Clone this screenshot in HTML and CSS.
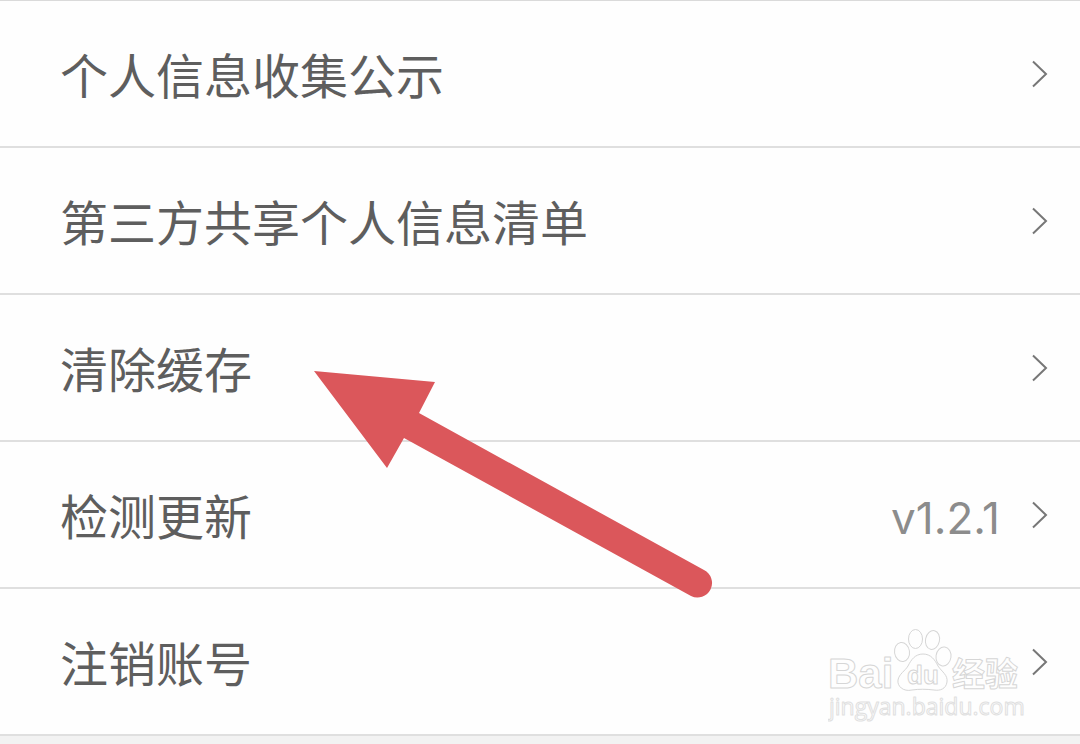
FILE: index.html
```html
<!DOCTYPE html>
<html lang="zh-CN">
<head>
<meta charset="utf-8">
<meta name="viewport" content="width=device-width, initial-scale=1">
<title>设置</title>
<link rel="stylesheet" href="styles.css">
</head>
<body>
<main class="screen">
  <nav class="list">
    <a class="row" href="#collect"><span class="label">个人信息收集公示</span><svg class="chevron" viewBox="0 0 16 28"><path d="M1 1.500L14 14L1 26.500"/></svg></a>
    <a class="row" href="#share"><span class="label">第三方共享个人信息清单</span><svg class="chevron" viewBox="0 0 16 28"><path d="M1 1.500L14 14L1 26.500"/></svg></a>
    <a class="row" href="#cache"><span class="label">清除缓存</span><svg class="chevron" viewBox="0 0 16 28"><path d="M1 1.500L14 14L1 26.500"/></svg></a>
    <a class="row" href="#update"><span class="label">检测更新</span><span class="value">v1.2.1</span><svg class="chevron" viewBox="0 0 16 28"><path d="M1 1.500L14 14L1 26.500"/></svg></a>
    <a class="row" href="#account"><span class="label">注销账号</span><svg class="chevron" viewBox="0 0 16 28"><path d="M1 1.500L14 14L1 26.500"/></svg></a>
  </nav>
  <svg class="arrow" viewBox="0 0 400 230" aria-hidden="true">
    <path d="M0 1L121 12L105 43L390 200A14 14 0 0 1 377 226L90 68L73 98Z"/>
  </svg>
  <svg class="watermark" viewBox="0 0 200 110" role="img" aria-label="Baidu经验">
    <text class="brand" x="0" y="68">Bai</text>
    <g class="paw">
      <ellipse cx="87.500" cy="19" rx="7" ry="9.500"/>
      <ellipse cx="104.500" cy="20" rx="7" ry="9.500" transform="rotate(12 104.500 20)"/>
      <ellipse cx="74" cy="32" rx="7.500" ry="9.500" transform="rotate(-8 74 32)"/>
      <ellipse cx="115.500" cy="36.500" rx="7.500" ry="9.500" transform="rotate(8 115.500 36.500)"/>
      <path d="M95 34C103 34 107 40 110 46C114 52 120 55 119 62C118 69 112 71 106 70C98 69 91 69 84 70C75 72 69 66 70 60C71 54 77 51 80 46C83 40 87 34 95 34Z"/>
    </g>
    <text class="du" x="79" y="64">du</text>
    <text class="han" x="124" y="66">经验</text>
    <text class="site" x="1" y="95">jingyan.baidu.com</text>
  </svg>
</main>
</body>
</html>
```
FILE: styles.css
```css
body {
  margin: 0;
  background: #f2f2f2;
  font-family: "Noto Sans CJK SC", sans-serif;
}

.screen {
  position: relative;
  min-height: 100vh;
  overflow: hidden;
}

.list {
  display: flex;
  flex-direction: column;
  background: #fefefe;
  border-top: 1px solid #dadada;
}

.row {
  display: flex;
  align-items: center;
  min-height: 145px;
  padding: 0 32px 0 60px;
  border-bottom: 2px solid #dfdfdf;
  color: #5e5e5e;
  text-decoration: none;
}

.label {
  flex: 1;
  padding-bottom: 2px;
  font-size: 48px;
  line-height: 72px;
}

.value {
  margin-right: 32px;
  padding-top: 6px;
  font-family: Inter, sans-serif;
  font-size: 44px;
  line-height: 48px;
  color: #8c8c8c;
}

.chevron {
  width: 16px;
  height: 28px;
  fill: none;
  stroke: #777;
  stroke-width: 2;
}

.arrow {
  position: absolute;
  top: 370px;
  left: 314px;
  width: 400px;
  height: 230px;
  fill: #db575b;
}

.watermark {
  position: absolute;
  top: 620px;
  left: 828px;
  width: 200px;
  height: 110px;
  fill: #fefefe;
  stroke: #d6d6d6;
  stroke-width: 1;
  stroke-linejoin: round;
}

.brand,
.du {
  font-family: "Liberation Sans", sans-serif;
  font-weight: 700;
}

.brand {
  font-size: 42px;
}

.du {
  font-size: 26px;
}

.han {
  font-size: 33px;
  font-weight: 700;
}

.site {
  font-family: "Open Sans", sans-serif;
  font-size: 23px;
  stroke: #e0e0e0;
}
```
